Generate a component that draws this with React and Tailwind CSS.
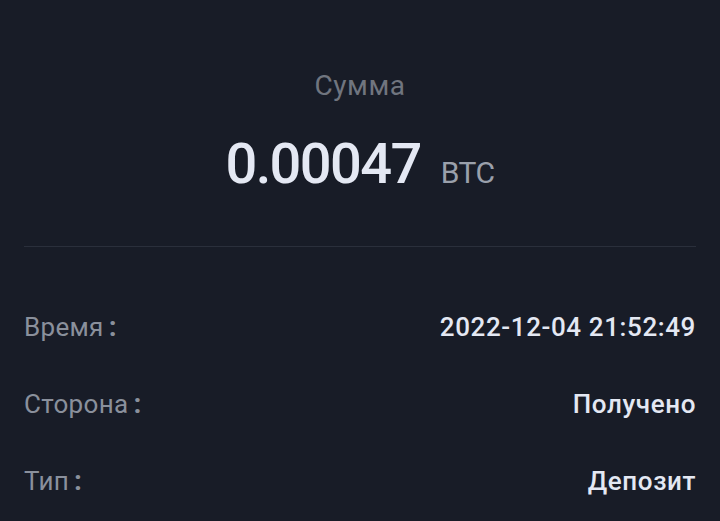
export default function App() {
  const rows = [
    ["Время", "2022-12-04 21:52:49"],
    ["Сторона", "Получено"],
    ["Тип", "Депозит"],
  ];
  return (
    <div className="w-[720px] h-[521px] overflow-hidden bg-[#181c27] px-6 font-['Roboto',sans-serif]">
      <div className="flex flex-col items-center pt-[68px]">
        <div className="text-[28px] leading-[36px] tracking-[0.6px] text-[#70757f]">Сумма</div>
        <div className="mt-[28px] flex items-baseline h-[64px]">
          <span className="text-[56px] leading-[64px] font-medium tracking-[-1.6px] text-[#e4e8f3]">0.00047</span>
          <span className="ml-[20px] text-[30px] tracking-[-0.5px] text-[#9aa0ab]">BTC</span>
        </div>
      </div>
      <div className="mt-[50px] h-px bg-[#2a2f3b]" />
      <div className="flex flex-col pt-[62px] gap-[41px]">
        {rows.map(([k, v]) => (
          <div key={k} className="flex justify-between items-center h-[36px]">
            <span className="text-[26px] tracking-[0.3px] text-[#8a909c]">
              {k}
              <span className="ml-[5px] font-bold text-[28px]">:</span>
            </span>
            <span className="text-[26px] font-medium tracking-[0.6px] text-[#e4e8f3]">{v}</span>
          </div>
        ))}
      </div>
    </div>
  );
}
